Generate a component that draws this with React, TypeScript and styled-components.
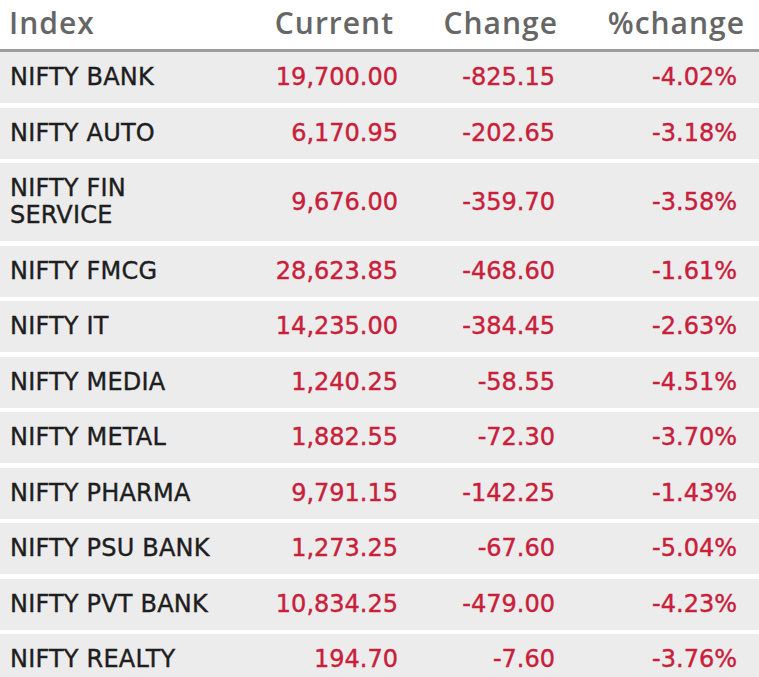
import React from 'react';
import styled, { createGlobalStyle } from 'styled-components';

const GlobalStyle = createGlobalStyle`
  html, body {
    margin: 0;
    padding: 0;
    background: #ffffff;
  }
`;

// 지수별 데이터
const rows: { name: string[]; current: string; change: string; pct: string }[] = [
  { name: ['NIFTY BANK'], current: '19,700.00', change: '-825.15', pct: '-4.02%' },
  { name: ['NIFTY AUTO'], current: '6,170.95', change: '-202.65', pct: '-3.18%' },
  { name: ['NIFTY FIN', 'SERVICE'], current: '9,676.00', change: '-359.70', pct: '-3.58%' },
  { name: ['NIFTY FMCG'], current: '28,623.85', change: '-468.60', pct: '-1.61%' },
  { name: ['NIFTY IT'], current: '14,235.00', change: '-384.45', pct: '-2.63%' },
  { name: ['NIFTY MEDIA'], current: '1,240.25', change: '-58.55', pct: '-4.51%' },
  { name: ['NIFTY METAL'], current: '1,882.55', change: '-72.30', pct: '-3.70%' },
  { name: ['NIFTY PHARMA'], current: '9,791.15', change: '-142.25', pct: '-1.43%' },
  { name: ['NIFTY PSU BANK'], current: '1,273.25', change: '-67.60', pct: '-5.04%' },
  { name: ['NIFTY PVT BANK'], current: '10,834.25', change: '-479.00', pct: '-4.23%' },
  { name: ['NIFTY REALTY'], current: '194.70', change: '-7.60', pct: '-3.76%' },
];

const App = () => {
  return (
    <React.Fragment>
      <GlobalStyle />
      <Table>
        <HeadRow>
          <HeadCell>Index</HeadCell>
          <HeadCell $right $pad={4}>Current</HeadCell>
          <HeadCell $right $pad={7}>Change</HeadCell>
          <HeadCell $right $pad={14}>%change</HeadCell>
        </HeadRow>
        <Body>
          {rows.map((row) => (
            <Row key={row.name.join(' ')}>
              <NameCell>
                {row.name.map((line) => (
                  <div key={line}>{line}</div>
                ))}
              </NameCell>
              <ValueCell $pad={0}>{row.current}</ValueCell>
              <ValueCell $pad={10}>{row.change}</ValueCell>
              <ValueCell $pad={22}>{row.pct}</ValueCell>
            </Row>
          ))}
        </Body>
      </Table>
    </React.Fragment>
  );
};

export default App;

const columns = '270px 128px 167px 1fr';

const Table = styled.div`
  width: 759px;
  height: 677px;
  overflow: hidden;
  background: #ffffff;
`;

const HeadRow = styled.div`
  display: grid;
  grid-template-columns: ${columns};
  align-items: center;
  height: 49px;
  border-bottom: 3px solid #9c9c9c;
  box-sizing: content-box;
`;

const HeadCell = styled.div<{ $right?: boolean; $pad?: number }>`
  font-family: 'Open Sans', 'Liberation Sans', sans-serif;
  font-weight: 600;
  font-size: 30px;
  letter-spacing: 1px;
  color: #666666;
  line-height: 1;
  padding-left: ${({ $right }) => ($right ? 0 : 9)}px;
  padding-right: ${({ $pad }) => $pad ?? 0}px;
  text-align: ${({ $right }) => ($right ? 'right' : 'left')};
  margin-top: -4px;
`;

const Body = styled.div`
  display: flex;
  flex-direction: column;
  gap: 4.5px;
`;

const Row = styled.div`
  display: grid;
  grid-template-columns: ${columns};
  align-items: center;
  min-height: 51px;
  background: #ececec;
  font-family: 'DejaVu Sans', Verdana, sans-serif;
  font-size: 24px;
  line-height: 27px;
  -webkit-text-stroke: 0.4px currentColor;
`;

const NameCell = styled.div`
  padding: 12px 0 12px 10px;
  color: #1e1e1e;
  letter-spacing: 0.2px;
`;

const ValueCell = styled.div<{ $pad: number }>`
  text-align: right;
  padding-right: ${({ $pad }) => $pad}px;
  color: #c8203a;
`;
